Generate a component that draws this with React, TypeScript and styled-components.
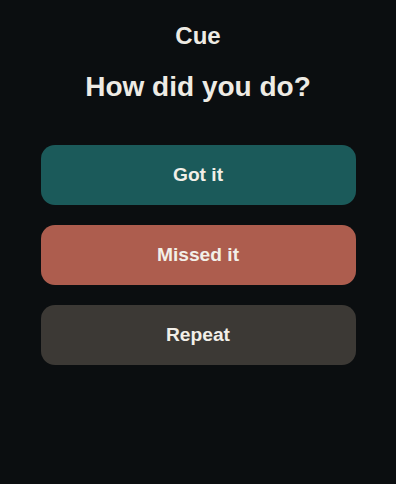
import styled, { createGlobalStyle } from "styled-components";

const GlobalStyle = createGlobalStyle`
  html, body {
    margin: 0;
    padding: 0;
    background: #0b0e10;
  }
  body {
    font-family: "Liberation Sans", Arial, sans-serif;
  }
`;

const Screen = styled.div`
  width: 396px;
  height: 484px;
  background: #0b0e10;
  display: flex;
  flex-direction: column;
  align-items: center;
  padding-top: 22px;
  box-sizing: border-box;
`;

const Title = styled.div`
  font-size: 24px;
  line-height: 1.2;
  font-weight: 700;
  color: #eeebe4;
`;

const Question = styled.h1`
  margin: 19px 0 0;
  font-size: 28px;
  line-height: 1.2;
  font-weight: 700;
  color: #eeebe4;
`;

const Choices = styled.div`
  margin-top: 42px;
  width: 315px;
  display: flex;
  flex-direction: column;
  gap: 20px;
`;

type ChoiceProps = {
  $tone: string,
}

const Choice = styled.button<ChoiceProps>`
  height: 60px;
  border: none;
  border-radius: 14px;
  background: ${(p) => p.$tone};
  color: #f2efe8;
  font-family: "Liberation Sans", Arial, sans-serif;
  font-size: 19.2px;
  font-weight: 700;
  cursor: pointer;
`;

export default function App() {
  return (
    <>
      <GlobalStyle />
      <Screen>
        <Title>Cue</Title>
        <Question>How did you do?</Question>
        <Choices>
          <Choice $tone="#1b5a5a">Got it</Choice>
          <Choice $tone="#ad5d4e">Missed it</Choice>
          <Choice $tone="#3c3935">Repeat</Choice>
        </Choices>
      </Screen>
    </>
  );
}
